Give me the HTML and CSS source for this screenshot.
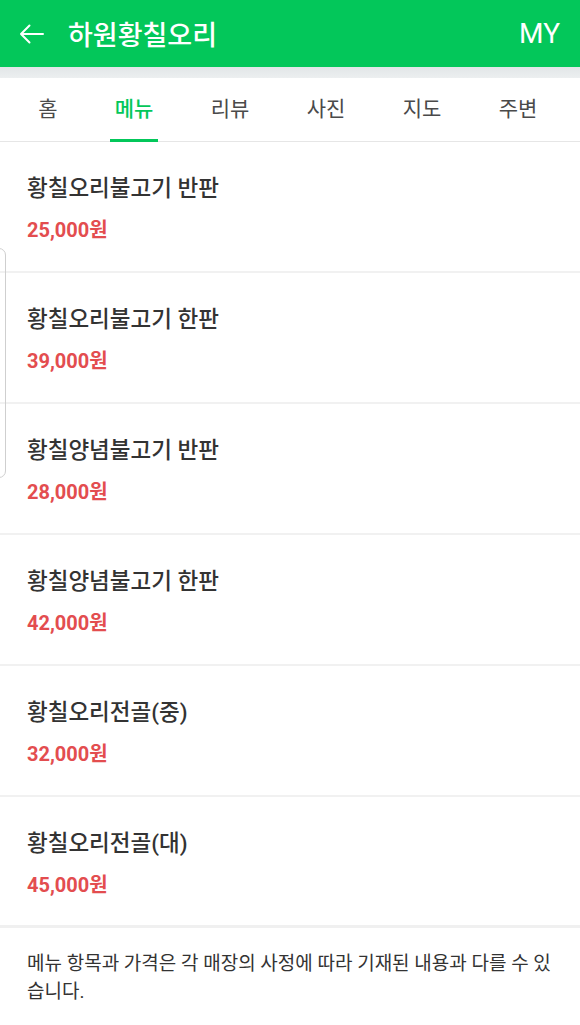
FILE: index.html
```html
<!DOCTYPE html>
<html lang="ko">
<head>
    <meta charset="UTF-8">
    <meta name="viewport" content="width=device-width, initial-scale=1.0">
    <title>하원황칠오리 - 메뉴</title>
    <link rel="stylesheet" href="styles.css">
</head>
<body>

<div class="header">
    <svg class="back" width="26" height="22" viewBox="0 0 26 22">
        <path d="M24 11H2M10.5 2.5L2 11l8.5 8.5" fill="none" stroke="#fff" stroke-width="2" stroke-linecap="round" stroke-linejoin="round"/>
    </svg>
    <div class="title">하원황칠오리</div>
    <div class="my">MY</div>
</div>
<div class="shade"></div>

<div class="tabs">
    <div class="tab first">홈</div>
    <div class="tab active">메뉴</div>
    <div class="tab">리뷰</div>
    <div class="tab">사진</div>
    <div class="tab">지도</div>
    <div class="tab">주변</div>
</div>

<div class="menu">
    <div class="item">
        <div class="name">황칠오리불고기 반판</div>
        <div class="price">25,000원</div>
    </div>
    <div class="item">
        <div class="name">황칠오리불고기 한판</div>
        <div class="price">39,000원</div>
    </div>
    <div class="item">
        <div class="name">황칠양념불고기 반판</div>
        <div class="price">28,000원</div>
    </div>
    <div class="item">
        <div class="name">황칠양념불고기 한판</div>
        <div class="price">42,000원</div>
    </div>
    <div class="item">
        <div class="name">황칠오리전골(중)</div>
        <div class="price">32,000원</div>
    </div>
    <div class="item">
        <div class="name">황칠오리전골(대)</div>
        <div class="price">45,000원</div>
    </div>
</div>

<div class="notice">메뉴 항목과 가격은 각 매장의 사정에 따라 기재된 내용과 다를 수 있습니다.</div>

<div class="edge-handle"></div>

</body>
</html>
```

FILE: styles.css
```css
body {
    margin: 0;
    font-family: Roboto, "Noto Sans CJK KR", sans-serif;
    background-color: #fff;
    color: #333;
    overflow: hidden;
}
.header {
    height: 67px;
    background-color: #03c75a;
    display: flex;
    align-items: center;
    padding: 0 20px 0 19px;
    color: #fff;
}
.back {
    margin-right: 23px;
}
.title {
    flex: 1;
    font-size: 27px;
    font-weight: 500;
}
.my {
    font-size: 28px;
    font-weight: 400;
}
.shade {
    height: 11px;
    background: linear-gradient(#e2e6e8, #eceff0);
}
.tabs {
    display: flex;
    height: 63px;
    padding-left: 10px;
    border-bottom: 1px solid #e6e6e6;
}
.tab {
    width: 96px;
    display: flex;
    align-items: center;
    justify-content: center;
    padding-bottom: 5px;
    box-sizing: border-box;
    font-size: 21px;
    color: #4a4a4a;
    position: relative;
}
.tab.first {
    width: 76px;
}
.tab.active {
    color: #03c75a;
    font-weight: 500;
}
.tab.active::after {
    content: "";
    position: absolute;
    left: 24px;
    right: 24px;
    bottom: -1px;
    height: 3px;
    background-color: #03c75a;
}
.item {
    height: 131px;
    box-sizing: border-box;
    padding: 30px 27px 0;
    border-bottom: 2px solid #f1f1f1;
}
.name {
    font-size: 22.5px;
    font-weight: 500;
    line-height: 32px;
    color: #333;
}
.price {
    margin-top: 14px;
    font-size: 20px;
    font-weight: 700;
    line-height: 24px;
    color: #e34d4f;
}
.menu .item:last-child {
    border-bottom: 3px solid #f0f0f0;
}
.notice {
    padding: 22px 20px 0 27px;
    font-size: 19px;
    line-height: 28px;
    color: #333;
}
.edge-handle {
    position: absolute;
    left: -8px;
    top: 248px;
    width: 12px;
    height: 228px;
    border: 1px solid #cfcfcf;
    border-radius: 7px;
}
```
